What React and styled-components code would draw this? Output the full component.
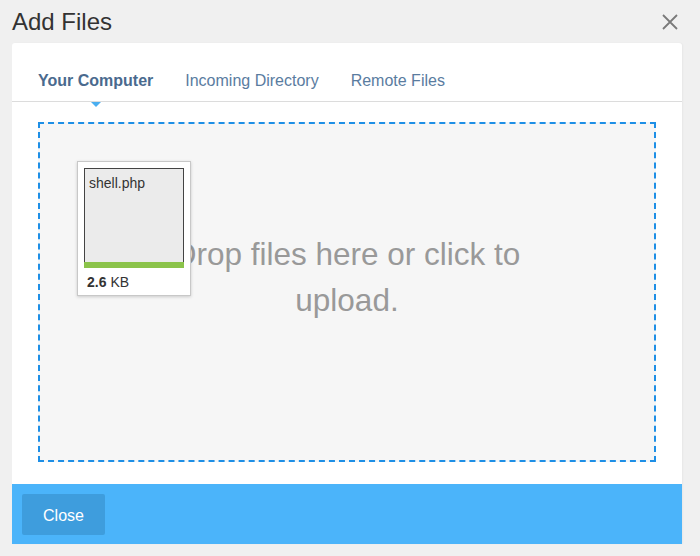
import React from "react";
import styled, { createGlobalStyle } from "styled-components";

const GlobalStyle = createGlobalStyle`
  html, body {
    margin: 0;
    padding: 0;
    background: #f0f0f0;
    font-family: "Liberation Sans", Arial, sans-serif;
  }
`;

const tabs = ["Your Computer", "Incoming Directory", "Remote Files"];

const App = () => {
  const [active, setActive] = React.useState(0);
  return (
    <>
      <GlobalStyle />
      <Page>
        <Header>
          <Title>Add Files</Title>
          <CloseIcon aria-label="close">
            <svg width="18" height="18" viewBox="0 0 18 18">
              <path d="M2 2L16 16M16 2L2 16" stroke="#7a7a7a" strokeWidth="1.8" />
            </svg>
          </CloseIcon>
        </Header>
        <Panel>
          <TabBar>
            {tabs.map((t, i) => (
              <Tab key={t} $active={i === active} onClick={() => setActive(i)}>
                {t}
              </Tab>
            ))}
          </TabBar>
          <Body>
            <DropZone>
              <Message>Drop files here or click to upload.</Message>
              <Preview>
                <Thumb>
                  <FileName>shell.php</FileName>
                  <Progress />
                </Thumb>
                <Size>
                  <strong>2.6</strong> KB
                </Size>
              </Preview>
            </DropZone>
          </Body>
          <Footer>
            <FooterButton>Close</FooterButton>
          </Footer>
        </Panel>
      </Page>
    </>
  );
};

const Page = styled.div`
  width: 700px;
  height: 556px;
  box-sizing: border-box;
  padding: 0 18px 0 12px;
`;

const Header = styled.div`
  height: 43px;
  display: flex;
  justify-content: space-between;
  align-items: center;
`;

const Title = styled.h1`
  margin: 0;
  font-size: 24px;
  font-weight: 400;
  color: #333;
`;

const CloseIcon = styled.div`
  display: flex;
  margin-top: 1px;
  margin-right: 3px;
  cursor: pointer;
`;

const Panel = styled.div`
  background: #fff;
  border-radius: 3px 3px 0 0;
  box-shadow: 1px 0 2px rgba(0, 0, 0, 0.04);
  display: flex;
  flex-direction: column;
`;

const TabBar = styled.div`
  height: 58px;
  display: flex;
  padding-left: 10px;
  border-bottom: 1px solid #dcdcdc;
`;

const Tab = styled.div`
  position: relative;
  padding: 0 16px;
  height: 100%;
  display: flex;
  align-items: center;
  padding-top: 18px;
  box-sizing: border-box;
  font-size: 16px;
  font-weight: ${(p) => (p.$active ? 700 : 400)};
  color: ${(p) => (p.$active ? "#4a6a8e" : "#5a7c9f")};
  cursor: pointer;
  &::after {
    content: "";
    display: ${(p) => (p.$active ? "block" : "none")};
    position: absolute;
    left: 50%;
    bottom: -6px;
    margin-left: -5px;
    border-left: 5px solid transparent;
    border-right: 5px solid transparent;
    border-top: 5px solid #4aaef0;
  }
`;

const Body = styled.div`
  padding: 20px 26px 22px;
`;

const DropZone = styled.div`
  position: relative;
  height: 340px;
  box-sizing: border-box;
  border: 2px dashed #1e8fe6;
  background: #f6f6f6;
  display: flex;
  justify-content: center;
  padding-top: 107px;
`;

const Message = styled.div`
  width: 380px;
  text-align: center;
  font-size: 31.5px;
  line-height: 46px;
  color: #999;
`;

const Preview = styled.div`
  position: absolute;
  left: 37px;
  top: 37px;
  width: 114px;
  box-sizing: border-box;
  padding: 6px 6px 0;
  background: #fff;
  border: 1px solid #c8c8c8;
  box-shadow: 0 1px 3px rgba(0, 0, 0, 0.18);
`;

const Thumb = styled.div`
  position: relative;
  height: 100px;
  box-sizing: border-box;
  border: 1px solid #444;
  border-bottom: none;
  background: #ebebeb;
`;

const FileName = styled.div`
  padding: 6px 4px;
  font-size: 14px;
  color: #333;
`;

const Progress = styled.div`
  position: absolute;
  left: -1px;
  right: -1px;
  bottom: 0;
  height: 6px;
  background: #8bc34a;
`;

const Size = styled.div`
  height: 27px;
  padding-left: 3px;
  display: flex;
  align-items: center;
  gap: 4px;
  font-size: 14px;
  color: #333;
`;

const Footer = styled.div`
  height: 60px;
  box-sizing: border-box;
  background: #4bb4fa;
  padding: 10px;
  display: flex;
  align-items: center;
`;

const FooterButton = styled.button`
  width: 83px;
  height: 41px;
  padding-top: 4px;
  border: none;
  border-radius: 2px;
  background: #3e9ddd;
  color: #fff;
  font-family: "Liberation Sans", Arial, sans-serif;
  font-size: 16px;
  cursor: pointer;
`;

export default App;
